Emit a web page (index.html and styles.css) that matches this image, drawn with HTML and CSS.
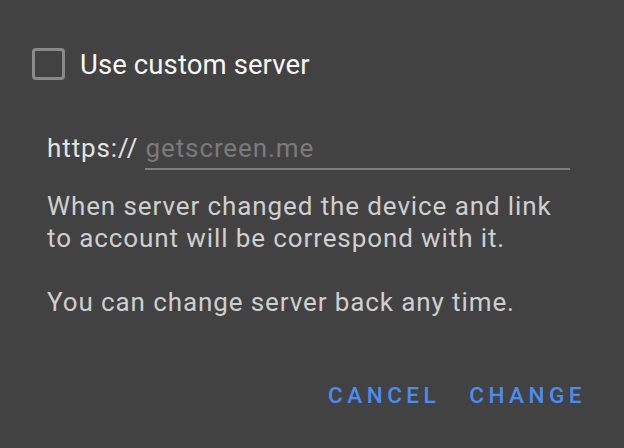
FILE: index.html
```html
<!DOCTYPE html>
<html>
<head>
<meta charset="utf-8">
<link rel="stylesheet" href="styles.css">
</head>
<body>
<div class="dialog">
  <label class="check-row">
    <span class="checkbox"></span>
    <span class="check-label">Use custom server</span>
  </label>
  <div class="server-row">
    <span class="prefix">https://</span>
    <span class="field"><span class="placeholder">getscreen.me</span></span>
  </div>
  <p class="note first">When server changed the device and link to account will be correspond with it.</p>
  <p class="note second">You can change server back any time.</p>
  <div class="actions">
    <span class="btn">CANCEL</span>
    <span class="btn">CHANGE</span>
  </div>
</div>
</body>
</html>
```
FILE: styles.css
```css
html, body {
  margin: 0;
  padding: 0;
  background: #424242;
}
body {
  width: 624px;
  height: 448px;
  overflow: hidden;
  font-family: Roboto, "Noto Sans", sans-serif;
}
.dialog {
  padding: 47px 0 0 32px;
  box-sizing: border-box;
}
.check-row {
  display: flex;
  align-items: center;
  gap: 15px;
  height: 33px;
}
.checkbox {
  width: 33px;
  height: 32px;
  box-sizing: border-box;
  border: 3px solid #8a8a8a;
  border-radius: 4px;
}
.check-label {
  font-size: 27.5px;
  line-height: 32px;
  letter-spacing: 0.1px;
  margin-top: 3px;
  color: #f7f7f7;
}
.server-row {
  display: flex;
  align-items: flex-end;
  margin: 52px 0 0 15px;
  width: 523px;
}
.prefix {
  font-size: 26px;
  line-height: 32px;
  letter-spacing: 0.9px;
  color: #e2e2e2;
  padding-bottom: 6px;
  margin-right: 7px;
}
.field {
  flex: 1;
  border-bottom: 2px solid #7e7e7e;
  padding-bottom: 4px;
}
.placeholder {
  display: block;
  font-size: 26px;
  line-height: 32px;
  letter-spacing: 0.9px;
  color: #7a7a7a;
}
.note {
  margin: 0 0 0 15px;
  font-size: 26px;
  line-height: 32px;
  letter-spacing: 0.9px;
  color: #cfcfcf;
  width: 520px;
}
.note.first { margin-top: 20px; }
.note.second { margin-top: 32px; }
.actions {
  display: flex;
  justify-content: flex-end;
  gap: 29px;
  margin-top: 63px;
  padding-right: 38px;
}
.btn {
  font-size: 22.5px;
  line-height: 28px;
  font-weight: 500;
  letter-spacing: 4.5px;
  color: #4b8cf0;
}
```
